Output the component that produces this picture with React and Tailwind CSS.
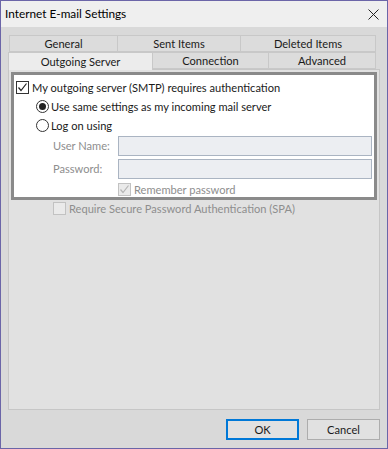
export default function App() {
  return (
    <div className="w-[388px] h-[449px] flex flex-col border border-[#6b65a8] bg-[#d9d9d9] text-[11.1px] text-[#1a1a1a] leading-none whitespace-nowrap" style={{ fontFamily: 'Lato, "Liberation Sans", sans-serif' }}>
      <TitleBar />
      <div className="flex-1 flex flex-col pt-[8px]">
        <Tabs />
        <TabPage />
        <div className="flex justify-end gap-[8px] pt-[9px] pr-[7px]">
          <button className="w-[73px] h-[21px] bg-[#e1e1e1] border-2 border-[#0078d7]">OK</button>
          <button className="w-[73px] h-[21px] bg-[#e1e1e1] border border-[#adadad]">Cancel</button>
        </div>
      </div>
    </div>
  );
}

function TitleBar() {
  return (
    <div className="h-[26px] bg-[#efefef] flex items-center justify-between pl-[4px] pr-[8px]">
      <span className="text-[11.8px] text-black">Internet E-mail Settings</span>
      <svg width="11" height="11" viewBox="0 0 11 11" stroke="#222" strokeWidth="1">
        <path d="M0.5 0.5 L10.5 10.5 M10.5 0.5 L0.5 10.5" />
      </svg>
    </div>
  );
}

function Tab({ w, label, active }) {
  return (
    <div
      className={
        active
          ? "h-[18px] flex items-center justify-center bg-[#ececec] border border-b-0 border-[#c8c8c8] -mb-px relative z-10"
          : "h-[17px] flex items-center justify-center bg-[#dcdcdc] border border-[#c8c8c8] -ml-px"
      }
      style={{ width: w }}
    >
      {label}
    </div>
  );
}

function Tabs() {
  return (
    <div className="flex flex-col">
      <div className="flex pl-[9px]">
        <Tab w={109} label="General" />
        <Tab w={124} label="Sent Items" />
        <Tab w={136} label="Deleted Items" />
      </div>
      <div className="flex pl-[7px] items-end">
        <Tab w={145} label="Outgoing Server" active />
        <Tab w={117} label="Connection" />
        <Tab w={108} label="Advanced" />
      </div>
    </div>
  );
}

function CheckBox({ checked, disabled }) {
  return (
    <span className={"w-[13px] h-[13px] shrink-0 border flex items-center justify-center " + (disabled ? "border-[#c2c2c2] bg-[#eaeaea]" : "border-[#333] bg-white")}>
      {checked && (
        <svg width="11" height="11" viewBox="0 0 11 11" fill="none" stroke={disabled ? "#b5b5b5" : "#222"} strokeWidth="1.2">
          <path d="M1.5 5.5 L4 8.5 L9.5 1.5" />
        </svg>
      )}
    </span>
  );
}

function Radio({ checked }) {
  return (
    <span className="w-[13px] h-[13px] shrink-0 rounded-full border border-[#333] bg-white flex items-center justify-center">
      {checked && <span className="w-[7px] h-[7px] rounded-full bg-[#222]" />}
    </span>
  );
}

function TabPage() {
  return (
    <div className="mx-[7px] h-[341px] bg-[#e1e1e1] border border-[#c6c6c6] pt-[2px] px-[2px]">
      <div className="bg-white border-[3px] border-[#8a8a8a] pl-[2px] pr-[2px] pb-[1px]">
        <div className="flex items-center gap-[3px] mt-[6px] h-[13px]">
          <CheckBox checked />
          <span>My outgoing server (SMTP) requires authentication</span>
        </div>
        <div className="flex items-center gap-[2px] mt-[6px] h-[13px] pl-[20px]">
          <Radio checked />
          <span>Use same settings as my incoming mail server</span>
        </div>
        <div className="flex items-center gap-[2px] mt-[6px] h-[13px] pl-[20px]">
          <Radio />
          <span>Log on using</span>
        </div>
        <div className="flex items-center mt-[4px] h-[20px] pl-[37px]">
          <span className="w-[65px] text-[#8e8e8e]">User Name:</span>
          <div className="flex-1 h-[20px] bg-[#eceef2] border border-[#aab4c2]" />
        </div>
        <div className="flex items-center mt-[3px] h-[20px] pl-[37px]">
          <span className="w-[65px] text-[#8e8e8e]">Password:</span>
          <div className="flex-1 h-[20px] bg-[#eceef2] border border-[#aab4c2]" />
        </div>
        <div className="flex items-center gap-[3px] mt-[4px] h-[13px] pl-[102px]">
          <CheckBox checked disabled />
          <span className="text-[#8e8e8e]">Remember password</span>
        </div>
      </div>
      <div className="flex items-center gap-[3px] mt-[2px] h-[13px] pl-[42px]">
        <CheckBox disabled />
        <span className="text-[#8e8e8e]">Require Secure Password Authentication (SPA)</span>
      </div>
    </div>
  );
}
